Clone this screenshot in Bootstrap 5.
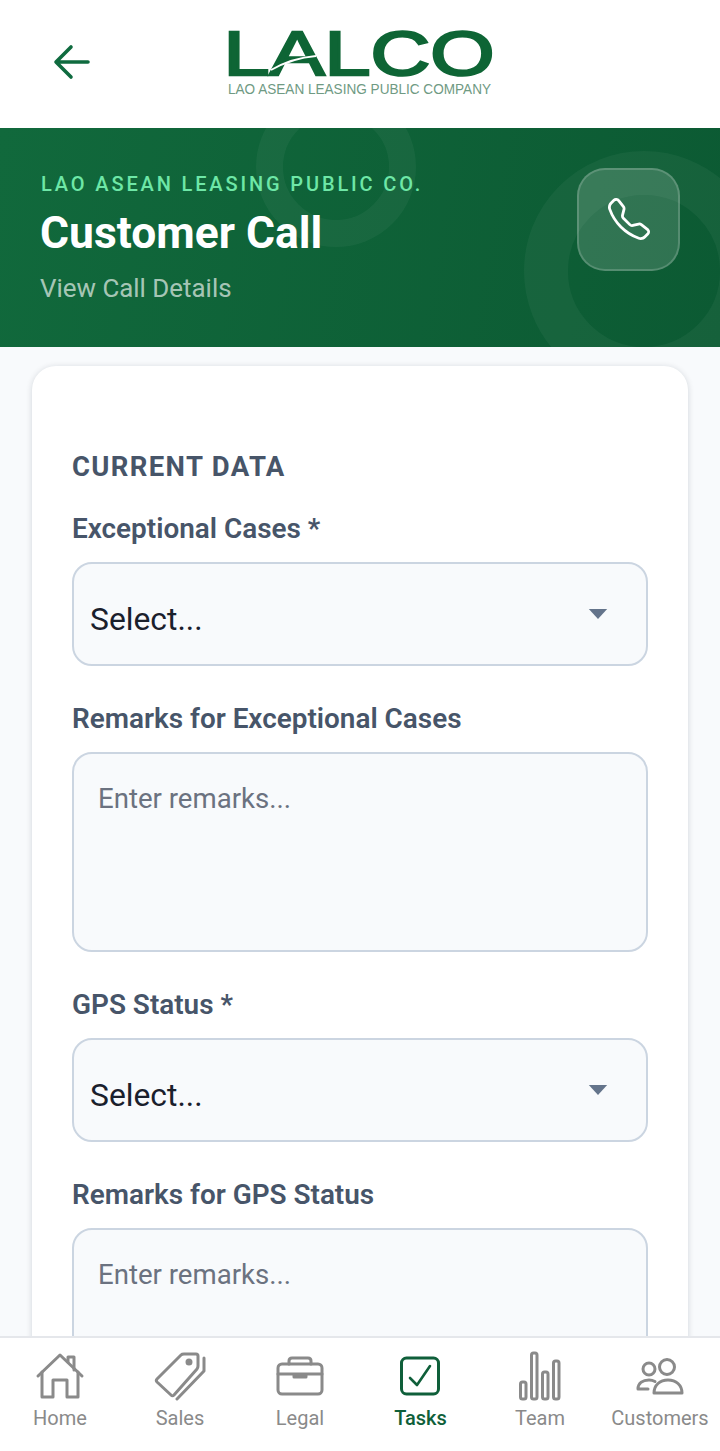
<!DOCTYPE html>
<html lang="en">
<head>
<meta charset="utf-8">
<title>Customer Call</title>
<link href="https://cdn.jsdelivr.net/npm/bootstrap@5.3.0/dist/css/bootstrap.min.css" rel="stylesheet">
<style>
html,body{height:100%;}
body{font-family:Roboto,"Liberation Sans",sans-serif;background:#f8fafc;overflow:hidden;}
.app-shell{height:1451px;}
.top-head{height:128px;padding:0 229px 4px 52px;background:#fff;}
.brand-logo{display:block;overflow:visible;}
.hero-band{height:219px;background:linear-gradient(100deg,#11693c,#0c5a33);padding:0 40px;overflow:hidden;}
.ring-a,.ring-b{position:absolute;border-radius:50%;border-style:solid;border-color:rgba(255,255,255,.045);}
.ring-a{left:256px;top:-41px;width:160px;height:160px;border-width:27px;}
.ring-b{left:524px;top:23px;width:240px;height:240px;border-width:44px;}
.hero-text{position:relative;}
.hero-eyebrow{font-size:20px;font-weight:500;letter-spacing:2.86px;color:#6ee7a7;line-height:24px;margin:-1px 0 0 1px;}
.hero-title{font-size:44.4px;font-weight:700;color:#fff;line-height:52px;margin:11px 0 0;}
.hero-sub{font-size:25.900px;color:rgba(255,255,255,.65);line-height:30px;margin-top:14px;}
.call-tile{position:relative;width:103px;height:103px;border-radius:28px;background:rgba(255,255,255,.15);border:2px solid rgba(255,255,255,.18);margin-top:-37px;}
.main-scroll{min-height:0;overflow:hidden;padding:19px 32px 0;}
.form-sheet{background:#fff;border-radius:24px;box-shadow:0 1px 6px rgba(15,23,42,.16);padding:84px 40px 40px;}
.sheet-heading{font-size:27.500px;font-weight:700;letter-spacing:1.35px;color:#475569;line-height:34px;margin:0 0 29px;}
.field-label{display:block;font-size:27.900px;font-weight:600;color:#475569;line-height:32px;margin:0 0 17px;}
.sheet-select.form-select{height:104px;border:2px solid #cbd5e1;border-radius:20px;background-color:#f8fafc;font-size:31.800px;color:#1a202c;padding:12px 60px 0 16px;margin-bottom:37px;background-size:20px 10px;background-position:right 38px top 45px;background-image:url("data:image/svg+xml,%3csvg xmlns='http://www.w3.org/2000/svg' viewBox='0 0 22 12'%3e%3cpath fill='%2364748b' d='M0 0h22L11 12z'/%3e%3c/svg%3e");}
.sheet-area.form-control{height:200px;border:2px solid #cbd5e1;border-radius:20px;background:#f8fafc;font-size:27.600px;padding:27px 24px;margin-bottom:37px;resize:none;line-height:36px;}
.sheet-area.form-control::placeholder{color:#6b7280;opacity:1;}
.tab-bar{height:115px;background:#fff;border-top:2px solid #e5e7eb;}
.tab-cell{width:120px;color:#8a8a8a;font-size:20px;line-height:24px;text-decoration:none;padding-top:13px;}
.tab-cell svg{display:block;margin-bottom:5px;}
.tab-cell.is-on{color:#0f5f3a;font-weight:500;padding-left:1px;}
.ic{fill:none;stroke:currentColor;stroke-width:3;stroke-linecap:round;stroke-linejoin:round;}
</style>
</head>
<body>
<div class="app-shell d-flex flex-column">
  <header class="top-head d-flex align-items-center justify-content-between flex-shrink-0">
    <a href="#" class="d-block" aria-label="Back">
      <svg class="d-block" width="40" height="40" viewBox="0 0 40 40" fill="none" stroke="#0f6b3f" stroke-width="3.600" stroke-linecap="round" stroke-linejoin="round"><path d="M5 20h31M19 5 4 20l15 15"/></svg>
    </a>
    <svg class="brand-logo" width="263" height="66" viewBox="0 0 263 66">
      <text x="-4.500" y="46" font-family="Liberation Sans" font-size="63" fill="#0e6535" stroke="#0e6535" stroke-width="2.400" textLength="271" lengthAdjust="spacingAndGlyphs">LALCO</text>
      <path d="M43 41Q64 29 88 27" fill="none" stroke="#fff" stroke-width="1.800"/>
      <text x="0" y="65" font-family="Liberation Sans" font-size="14" fill="#6f9a83" textLength="263" lengthAdjust="spacingAndGlyphs">LAO ASEAN LEASING PUBLIC COMPANY</text>
    </svg>
  </header>

  <section class="hero-band position-relative d-flex align-items-center justify-content-between flex-shrink-0">
    <span class="ring-a"></span><span class="ring-b"></span>
    <div class="hero-text">
      <div class="hero-eyebrow">LAO ASEAN LEASING PUBLIC CO.</div>
      <h1 class="hero-title">Customer Call</h1>
      <div class="hero-sub">View Call Details</div>
    </div>
    <div class="call-tile d-flex align-items-center justify-content-center">
      <svg width="42" height="42" viewBox="0 0 16 16" fill="#fff"><path d="M3.654 1.328a.678.678 0 0 0-1.015-.063L1.605 2.3c-.483.484-.661 1.169-.45 1.77a17.568 17.568 0 0 0 4.168 6.608 17.569 17.569 0 0 0 6.608 4.168c.601.211 1.286.033 1.77-.45l1.034-1.034a.678.678 0 0 0-.063-1.015l-2.307-1.794a.678.678 0 0 0-.58-.122l-2.19.547a1.745 1.745 0 0 1-1.657-.459L5.482 8.062a1.745 1.745 0 0 1-.46-1.657l.548-2.19a.678.678 0 0 0-.122-.58L3.654 1.328zM1.884.511a1.745 1.745 0 0 1 2.612.163L6.29 2.98c.329.423.445.974.315 1.494l-.547 2.19a.678.678 0 0 0 .178.643l2.457 2.457a.678.678 0 0 0 .644.178l2.189-.547a1.745 1.745 0 0 1 1.494.315l2.306 1.794c.829.645.905 1.87.163 2.611l-1.034 1.034c-.74.74-1.846 1.065-2.877.702a18.634 18.634 0 0 1-7.01-4.42 18.634 18.634 0 0 1-4.42-7.009c-.362-1.03-.037-2.137.703-2.877L1.885.511z"/></svg>
    </div>
  </section>

  <main class="main-scroll flex-grow-1">
    <form class="form-sheet">
      <h2 class="sheet-heading">CURRENT DATA</h2>
      <label class="field-label" for="f1">Exceptional Cases *</label>
      <select class="form-select sheet-select" id="f1"><option>Select...</option></select>
      <label class="field-label" for="f2">Remarks for Exceptional Cases</label>
      <textarea class="form-control sheet-area" id="f2" placeholder="Enter remarks..."></textarea>
      <label class="field-label" for="f3">GPS Status *</label>
      <select class="form-select sheet-select" id="f3"><option>Select...</option></select>
      <label class="field-label" for="f4">Remarks for GPS Status</label>
      <textarea class="form-control sheet-area" id="f4" placeholder="Enter remarks..."></textarea>
    </form>
  </main>

  <nav class="tab-bar d-flex flex-shrink-0">
    <a href="#" class="tab-cell d-flex flex-column align-items-center">
      <svg class="ic" width="60" height="50" viewBox="0 0 60 50"><path d="M8 25 30 4l22 21"/><path d="M38 11V6h6v13"/><path d="M12 21v25h11V29h14v17h11V21"/></svg>Home</a>
    <a href="#" class="tab-cell d-flex flex-column align-items-center">
      <svg class="ic" width="60" height="50" viewBox="0 0 60 50"><path d="M7 28 31 4c1-1 2-1 3-1h12c1.500 0 2 1 2 2v10c0 1-.3 2-1 3L24 44c-1 1-2 1-3 0L7 31c-1-1-1-2 0-3z"/><circle cx="39" cy="11" r="2" fill="currentColor"/><path d="M54 7v13L27 48"/></svg>Sales</a>
    <a href="#" class="tab-cell d-flex flex-column align-items-center">
      <svg class="ic" width="60" height="50" viewBox="0 0 60 50"><rect x="8" y="13" width="44" height="30" rx="4"/><path d="M19 13V10c0-2 1-3 3-3h16c2 0 3 1 3 3v3"/><path d="M8 23h44"/><path d="M24 24h12v2H24z" fill="currentColor"/></svg>Legal</a>
    <a href="#" class="tab-cell is-on d-flex flex-column align-items-center">
      <svg class="ic" width="60" height="50" viewBox="0 0 60 50"><rect x="10.500" y="7" width="37" height="36" rx="5"/><path d="m19 27 7 7 13-19" stroke-width="2.600"/></svg>Tasks</a>
    <a href="#" class="tab-cell d-flex flex-column align-items-center">
      <svg class="ic" width="60" height="50" viewBox="0 0 60 50"><rect x="10.500" y="31" width="5.500" height="17" rx="2"/><rect x="21.500" y="2" width="5.500" height="46" rx="2"/><rect x="32.500" y="21" width="5.500" height="27" rx="2"/><rect x="43.500" y="10" width="5.500" height="38" rx="2"/></svg>Team</a>
    <a href="#" class="tab-cell d-flex flex-column align-items-center">
      <svg class="ic" width="60" height="50" viewBox="0 0 60 50"><circle cx="37" cy="16" r="7.500"/><circle cx="19" cy="18" r="6"/><path d="M24 42c0-8 6-13 14-13s14 5 14 13z"/><path d="M18 38H8c0-6 5-9 11-9 2 0 4 .4 6 1.500"/></svg>Customers</a>
  </nav>
</div>
<script src="https://cdn.jsdelivr.net/npm/bootstrap@5.3.0/dist/js/bootstrap.bundle.min.js"></script>
</body>
</html>
